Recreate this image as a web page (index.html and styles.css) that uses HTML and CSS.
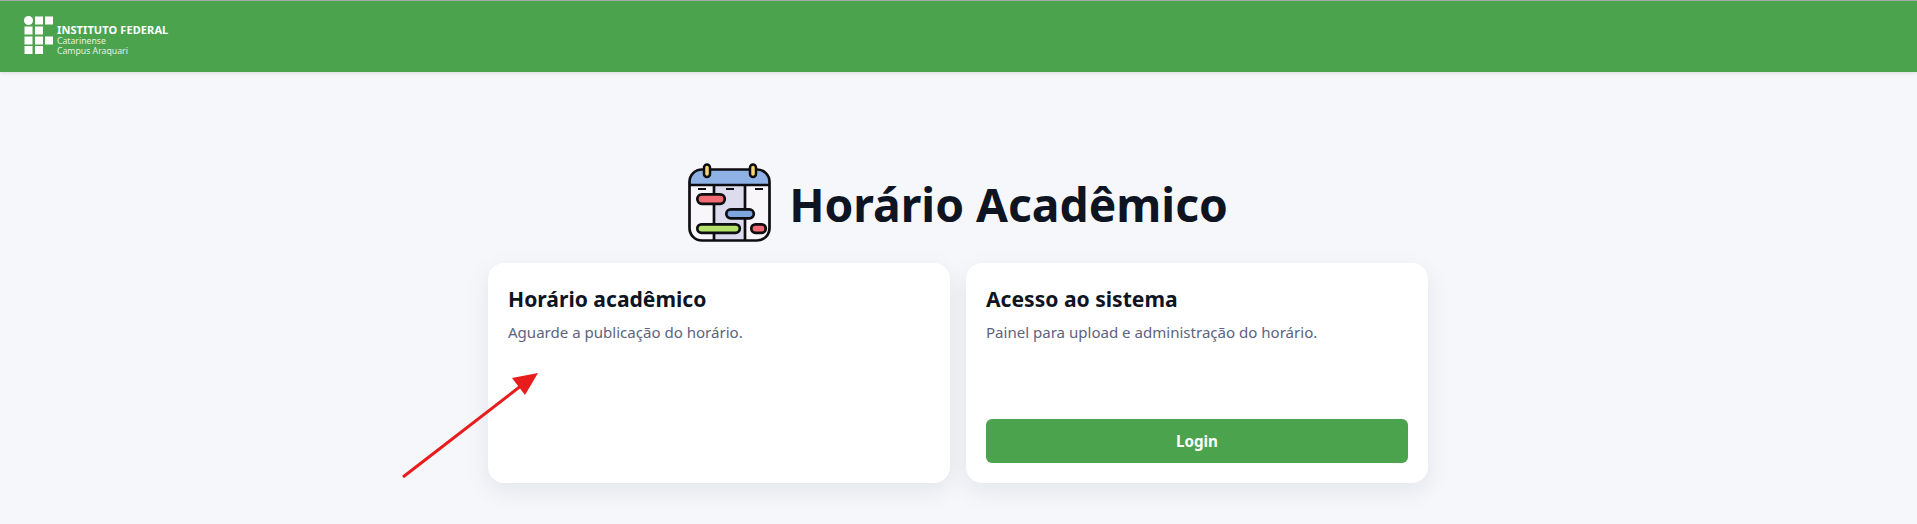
FILE: index.html
```html
<!DOCTYPE html>
<html lang="pt-BR">
<head>
<meta charset="utf-8">
<title>Horário Acadêmico</title>
<link rel="stylesheet" href="styles.css">
</head>
<body>
<header class="topbar">
  <div class="brand">
    <svg class="brand-mark" viewBox="0 0 29 38" aria-hidden="true">
      <circle cx="4.5" cy="4.5" r="4.5"/>
      <rect x="11" y="0.5" width="8" height="8"/><rect x="21" y="0.5" width="8" height="8"/>
      <rect x="0.5" y="10.5" width="8" height="8"/><rect x="11" y="10.5" width="8" height="8"/>
      <rect x="0.5" y="20.5" width="8" height="8"/><rect x="11" y="20.5" width="8" height="8"/><rect x="21" y="20.5" width="8" height="8"/>
      <rect x="0.5" y="30" width="8" height="8"/><rect x="11" y="30" width="8" height="8"/>
    </svg>
    <div class="brand-text">
      <strong class="brand-name">INSTITUTO FEDERAL</strong>
      <span class="brand-sub">Catarinense</span>
      <span class="brand-sub">Campus Araquari</span>
    </div>
  </div>
</header>
<main class="page">
  <div class="heading">
    <svg class="heading-icon" viewBox="0 0 84 80" aria-hidden="true">
      <path d="M1.5 22V19C1.500 12 7 6.500 14 6.500H69C76 6.500 81.500 12 81.500 19V22Z" fill="#8eb1e6"/>
      <path d="M1.500 22H26V77.500H14C7 77.500 1.500 72 1.500 65Z" fill="#f8f6f8"/>
      <rect x="26" y="22" width="31" height="55.500" fill="#dcdcee"/>
      <path d="M57 22H81.500V65C81.500 72 76 77.500 69 77.500H57Z" fill="#f8f6f8"/>
      <path d="M1.500 65V19C1.500 12 7 6.500 14 6.500H69C76 6.500 81.500 12 81.500 19V65C81.500 72 76 77.500 69 77.500H14C7 77.500 1.500 72 1.500 65Z" fill="none" stroke="#0d0d12" stroke-width="2.700"/>
      <path d="M1.500 22H81.500M26 22V78M57 22V78" fill="none" stroke="#0d0d12" stroke-width="2.700"/>
      <rect x="16" y="1.500" width="6" height="12.500" rx="3" fill="#f5d76e" stroke="#0d0d12" stroke-width="2.500"/>
      <rect x="62" y="1.500" width="6" height="12.500" rx="3" fill="#f5d76e" stroke="#0d0d12" stroke-width="2.500"/>
      <path d="M10 26H18M38 26H46M67 26H75" fill="none" stroke="#0d0d12" stroke-width="2"/>
      <rect x="9.300" y="31.300" width="27.500" height="9.500" rx="4.700" fill="#f26a72" stroke="#0d0d12" stroke-width="2.700"/>
      <rect x="38.300" y="46.300" width="27.500" height="9" rx="4.500" fill="#7da5de" stroke="#0d0d12" stroke-width="2.700"/>
      <rect x="9.300" y="61.300" width="42.500" height="8.500" rx="4.200" fill="#b5e26a" stroke="#0d0d12" stroke-width="2.700"/>
      <rect x="63.300" y="61.300" width="14.500" height="8.500" rx="4.200" fill="#f26a72" stroke="#0d0d12" stroke-width="2.700"/>
    </svg>
    <h1 class="heading-title">Horário Acadêmico</h1>
  </div>
  <section class="cards">
    <article class="card">
      <h2 class="card-title">Horário acadêmico</h2>
      <p class="card-text">Aguarde a publicação do horário.</p>
    </article>
    <article class="card">
      <h2 class="card-title">Acesso ao sistema</h2>
      <p class="card-text">Painel para upload e administração do horário.</p>
      <a class="button" href="#">Login</a>
    </article>
  </section>
</main>
<svg class="annotation" viewBox="0 0 145 115" aria-hidden="true">
  <path d="M3 109 L122 17" fill="none" stroke="#e81c1c" stroke-width="3"/>
  <path d="M138 5 L125 27 L112 10Z" fill="#e81c1c"/>
</svg>
</body>
</html>
```
FILE: styles.css
```css
* { box-sizing: border-box; }
html, body { margin: 0; height: 100%; }
body {
  background: #f5f7fb;
  color: #0f172a;
  font-family: "Noto Sans", "Open Sans", "Liberation Sans", sans-serif;
  overflow: hidden;
  padding-right: 1px;
}
.topbar {
  height: 72px;
  margin-right: -1px;
  background: #4ca34e;
  border-top: 1px solid #a9aaa9;
  box-shadow: 0 1px 4px rgba(15, 23, 42, 0.12);
  display: flex;
  align-items: center;
  padding: 0 24px;
}
.brand { display: flex; align-items: flex-start; color: #fff; margin-top: -1px; }
.brand-mark { width: 29px; height: 38px; fill: #fff; flex: none; }
.brand-text { display: flex; flex-direction: column; margin: 7px 0 0 4px; }
.brand-name { font-size: 11px; line-height: 13px; font-weight: 700; letter-spacing: 0.1px; }
.brand-sub { font-size: 8.7px; line-height: 10.5px; color: #e4f1e4; }
.page {
  width: 940px;
  margin: 91px auto 0;
  display: flex;
  flex-direction: column;
  align-items: center;
}
.heading { display: flex; align-items: center; gap: 17px; height: 80px; margin-bottom: 20px; }
.heading-icon { width: 84px; height: 80px; flex: none; }
.heading-title { margin: 0; font-size: 46.2px; line-height: 60px; font-weight: 700; color: #0f1422; margin-top: 4px; }
.cards { width: 100%; display: grid; grid-template-columns: 1fr 1fr; gap: 16px; }
.card {
  height: 220px;
  background: #fff;
  border-radius: 16px;
  box-shadow: 0 8px 24px rgba(15, 23, 42, 0.08);
  padding: 20px;
  display: flex;
  flex-direction: column;
}
.card-title { margin: 0; font-size: 21.1px; line-height: 32px; font-weight: 700; color: #0f1422; }
.card-text { margin: 6px 0 0; font-size: 15.05px; line-height: 22px; color: #5b6480; }
.button {
  margin-top: auto;
  height: 44px;
  border-radius: 6px;
  background: #4ca34e;
  color: #fff;
  font-size: 15.2px;
  font-weight: 700;
  text-decoration: none;
  display: flex;
  align-items: center;
  justify-content: center;
}
.annotation { position: absolute; left: 400px; top: 368px; width: 145px; height: 115px; }
```
